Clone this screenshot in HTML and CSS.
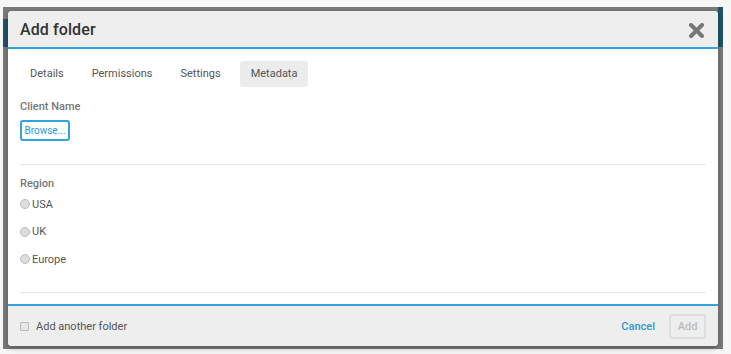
FILE: index.html
```html
<!DOCTYPE html>
<html>
<head>
<meta charset="utf-8">
<link rel="stylesheet" href="styles.css">
</head>
<body>
<div class="page">
  <div class="backdrop">
    <div class="bg-strip left"></div>
    <div class="bg-strip right"></div>
    <div class="modal">
      <div class="modal-header">
        <h1 class="title">Add folder</h1>
        <svg class="close" width="15" height="15" viewBox="0 0 15 15"><path d="M2 2 L13 13 M13 2 L2 13" stroke="#777" stroke-width="4" stroke-linecap="round"/></svg>
      </div>
      <div class="modal-body">
        <div class="tabs">
          <span class="tab">Details</span>
          <span class="tab">Permissions</span>
          <span class="tab">Settings</span>
          <span class="tab active">Metadata</span>
        </div>
        <div class="section">
          <div class="label">Client Name</div>
          <button class="browse">Browse...</button>
        </div>
        <hr class="sep">
        <div class="section region">
          <div class="label">Region</div>
          <label class="radio"><span class="dot"></span>USA</label>
          <label class="radio"><span class="dot"></span>UK</label>
          <label class="radio"><span class="dot"></span>Europe</label>
        </div>
        <hr class="sep bottom">
      </div>
      <div class="modal-footer">
        <label class="check"><span class="box"></span>Add another folder</label>
        <div class="actions">
          <span class="cancel">Cancel</span>
          <span class="add">Add</span>
        </div>
      </div>
    </div>
  </div>
</div>
</body>
</html>
```
FILE: styles.css
```css
* { box-sizing: border-box; }
html, body { margin: 0; padding: 0; }
body {
  width: 731px; height: 354px; overflow: hidden;
  background: #f7f7f7;
  font-family: Roboto, "Liberation Sans", sans-serif;
}
.page { padding: 7px 8px 5px 3px; height: 354px; }
.backdrop {
  position: relative;
  background: #7b7b7b;
  height: 342px;
  padding: 4px 5px 3px 5px;
}
.bg-strip { position: absolute; background: #1f5468; }
.bg-strip.left { left: 0; top: 12px; width: 5px; height: 28px; }
.bg-strip.right { right: 0; top: 0; width: 5px; height: 40px; }
.modal {
  position: relative;
  background: #fff;
  border-radius: 4px;
  overflow: hidden;
  height: 335px;
  display: flex; flex-direction: column;
  box-shadow: 0 2px 6px rgba(0,0,0,0.3);
}
.modal-header {
  background: #eeeeee;
  height: 38px;
  border-bottom: 2px solid #2fa4de;
  display: flex; align-items: center; justify-content: space-between;
  padding: 0 14px 0 12px;
  flex-shrink: 0;
}
.title { margin: 0; font-size: 16px; font-weight: 500; color: #333; letter-spacing: 0.1px; }
.close { margin-top: 2px; }
.modal-body { padding: 12px 12px 0 12px; flex: 1; min-height: 0; }
.tabs { display: flex; gap: 8px; height: 26px; }
.tab {
  font-size: 11px; color: #555;
  padding: 0 10px; line-height: 26px; border-radius: 3px;
}
.tab.active { background: #ececec; padding: 0 11px; margin-left: 1px; }
.section { padding-top: 13px; }
.label { font-size: 11px; font-weight: 500; color: #777; line-height: 14px; }
.browse {
  margin-top: 6px;
  font-family: inherit; font-size: 10px; color: #2a9ad8;
  background: #fff; border: 2px solid #2fa4de; border-radius: 3px;
  width: 50px; height: 21px; padding: 0; line-height: 16px;
}
.sep { border: 0; border-top: 1px solid #e6e6e6; margin: 23px 0 0 0; }
.region { padding-top: 12px; }
.radio {
  display: flex; align-items: center; gap: 2px;
  font-size: 11px; color: #555; height: 14px; margin-top: 6px; margin-bottom: 13.5px;
}
.radio + .radio { margin-top: 0; }
.dot {
  width: 10px; height: 10px; border-radius: 50%;
  background: #ddd; border: 1px solid #bbb;
}
.sep.bottom { margin-top: 26px; }
.modal-footer {
  flex-shrink: 0;
  height: 42px;
  background: #eeeeee;
  border-top: 2px solid #2fa4de;
  display: flex; align-items: center; justify-content: space-between;
  padding: 0 12px 0 12px;
}
.check { display: flex; align-items: center; gap: 7px; font-size: 11px; color: #555; }
.box { width: 9px; height: 9px; border: 1px solid #bbb; background: #e6e6e6; border-radius: 1px; }
.actions { display: flex; align-items: center; gap: 14px; }
.cancel { font-size: 11px; font-weight: 500; color: #2a9ad8; }
.add {
  font-size: 11px; font-weight: 500; color: #bbb;
  width: 37px; height: 25px; border: 2px solid #ddd; border-radius: 3px;
  display: flex; align-items: center; justify-content: center;
}
```
